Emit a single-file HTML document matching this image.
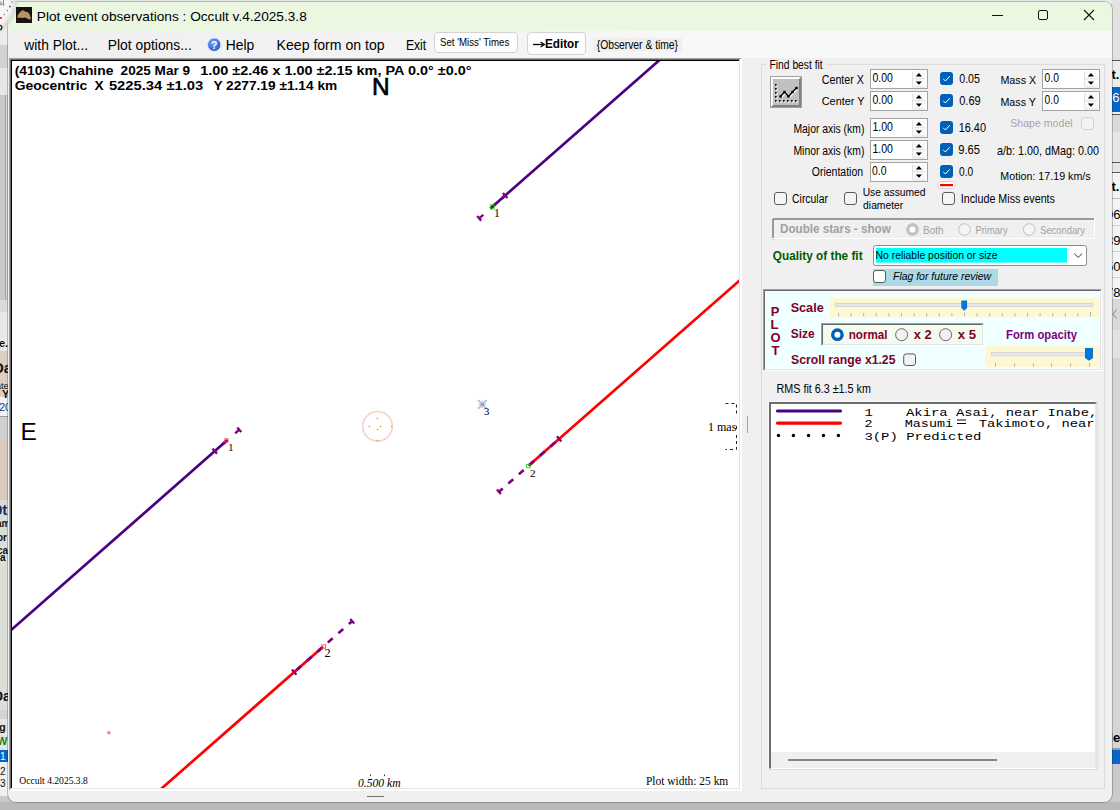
<!DOCTYPE html>
<html><head><meta charset="utf-8">
<style>
*{box-sizing:border-box;margin:0;padding:0}
html,body{width:1120px;height:810px;overflow:hidden;background:#c4c4c4;font-family:"Liberation Sans",sans-serif;position:relative}
.a{position:absolute}
.ov{position:absolute;left:0;top:0}
</style></head><body>
<!-- background windows -->
<div class="a" style="left:0;top:0;width:1120px;height:810px;background:#c9c9c9"></div>
<div class="a" style="left:0;top:0;width:1120px;height:4px;background:#e9e9e9"></div>
<div class="a" style="left:0;top:0;width:8px;height:45px;background:#ececec"></div>
<div class="a" style="left:0;top:45px;width:8px;height:23px;background:#d2d2d2"></div>
<div class="a" style="left:0;top:68px;width:8px;height:27px;background:#e6e6e6"></div>
<div class="a" style="left:5px;top:95px;width:1px;height:205px;background:#a2a2a2"></div>
<div class="a" style="left:6px;top:95px;width:1px;height:205px;background:#d6d6d6"></div>
<div class="a" style="left:0;top:300px;width:8px;height:12px;background:#d9d9d9"></div>
<div class="a" style="left:0;top:312px;width:8px;height:39px;background:#e9e9e9"></div>
<div class="a" style="left:0;top:351px;width:8px;height:46px;background:#dccfc0"></div>
<div class="a" style="left:0;top:397px;width:8px;height:19px;background:#f3f3f3"></div>
<div class="a" style="left:0;top:416px;width:8px;height:1px;background:#999"></div>
<div class="a" style="left:0;top:417px;width:8px;height:23px;background:#d0d0d0"></div>
<div class="a" style="left:0;top:440px;width:8px;height:60px;background:#d8cbbb"></div>
<div class="a" style="left:0;top:500px;width:8px;height:210px;background:#d9dfd6"></div>
<div class="a" style="left:0;top:710px;width:8px;height:40px;background:#e3e6e1"></div>
<div class="a" style="left:0;top:710px;width:8px;height:9px;background:#d4d4d4"></div>
<div class="a" style="left:0;top:750px;width:8px;height:12px;background:#0a64c8"></div>
<div class="a" style="left:0;top:762px;width:8px;height:34px;background:#f0f0f0"></div>
<svg class="a" style="left:0;top:0" width="12" height="810">
 <g font-family="Liberation Sans" font-weight="bold" fill="#111">
  <text x="-1" y="347.3" font-size="11">e.</text>
  <text x="-7" y="373.2" font-size="15">Da</text>
  <text x="-4" y="389.3" font-size="9" font-weight="normal">ate</text>
  <text x="2" y="397.9" font-size="11">Y</text>
  <text x="-1" y="410.9" font-size="11" font-weight="normal" fill="#1a3a8a">20</text>
  <text x="-6" y="515" font-size="15" fill="#1a2a5a">0t</text>
  <text x="-4" y="527" font-size="10">am</text>
  <text x="-3" y="541" font-size="10">or</text>
  <text x="-3" y="553.9" font-size="10">ca</text>
  <text x="0" y="561.3" font-size="10">a</text>
  <text x="-7" y="701.3" font-size="14">Da</text>
  <text x="-1" y="731" font-size="11">g</text>
  <text x="-3" y="744.7" font-size="11" fill="#2a7a2a">W</text>
  <text x="0" y="760" font-size="10" font-weight="normal" fill="#fff">1</text>
  <text x="0" y="775.4" font-size="10" font-weight="normal">2</text>
  <text x="0" y="787.2" font-size="10" font-weight="normal">3</text>
 </g>
</svg>
<div class="a" style="left:1112px;top:0;width:8px;height:60px;background:#e2e2e2"></div>
<div class="a" style="left:1112px;top:60px;width:8px;height:1px;background:#555"></div>
<div class="a" style="left:1112px;top:61px;width:8px;height:26px;background:#ececec"></div>
<div class="a" style="left:1112px;top:87px;width:8px;height:25px;background:#0866c6"></div>
<div class="a" style="left:1112px;top:112px;width:8px;height:2px;background:#f0f0f0"></div>
<div class="a" style="left:1112px;top:114px;width:8px;height:1px;background:#555"></div>
<div class="a" style="left:1112px;top:115px;width:8px;height:17px;background:#d9d9d9"></div>
<div class="a" style="left:1112px;top:132px;width:8px;height:30px;background:#e6e6e6"></div>
<div class="a" style="left:1112px;top:162px;width:8px;height:1px;background:#555"></div>
<div class="a" style="left:1112px;top:163px;width:8px;height:9px;background:#e6e6e6"></div>
<div class="a" style="left:1112px;top:172px;width:8px;height:1px;background:#555"></div>
<div class="a" style="left:1112px;top:173px;width:8px;height:126px;background:#f4f4f4"></div>
<div class="a" style="left:1112px;top:198px;width:8px;height:1px;background:#bdbdbd"></div>
<div class="a" style="left:1112px;top:225px;width:8px;height:1px;background:#d0d0d0"></div>
<div class="a" style="left:1112px;top:251px;width:8px;height:1px;background:#d0d0d0"></div>
<div class="a" style="left:1112px;top:277px;width:8px;height:1px;background:#d0d0d0"></div>
<div class="a" style="left:1112px;top:299px;width:8px;height:31px;background:#d9d9d9"></div>
<div class="a" style="left:1112px;top:330px;width:8px;height:28px;background:#e2e2e2"></div>
<div class="a" style="left:1112px;top:358px;width:8px;height:390px;background:#d5d5d5"></div>
<div class="a" style="left:1112px;top:748px;width:8px;height:2px;background:#9a9a9a"></div>
<div class="a" style="left:1112px;top:750px;width:8px;height:14px;background:#0866c6"></div>
<div class="a" style="left:1112px;top:764px;width:8px;height:38px;background:#cacaca"></div>
<svg class="a" style="left:0;top:0" width="1120" height="810">
 <g font-family="Liberation Sans" font-weight="bold" font-size="13">
  <text x="1111.5" y="78.5">t.</text>
  <text x="1105" y="102" fill="#fff" font-weight="normal">56</text>
  <text x="1111.5" y="190.5">t.</text>
  <text x="1106" y="219" font-weight="normal">06</text>
  <text x="1106" y="245.4" font-weight="normal">39</text>
  <text x="1106" y="271" font-weight="normal">50</text>
  <text x="1106" y="296.8" font-weight="normal">78</text>
  <text x="1105" y="742">de</text>
 </g>
 <path d="M1116.5 309.5L1113 314L1116.5 318.5" stroke="#888" stroke-width="1" fill="none"/>
</svg>
<div class="a" style="left:0;top:802px;width:1120px;height:8px;background:#b9b9b9"></div>

<!-- window -->
<div class="a" style="left:8px;top:2px;width:1104px;height:800px;background:#f0f0f0;border-radius:8px;overflow:hidden;box-shadow:0 0 0 1px rgba(0,0,0,0.22)">
 <div class="a" style="left:0;top:0;width:1104px;height:29px;background:#ebf7e1"></div>
 <div class="a" style="left:0;top:29px;width:1104px;height:27px;background:linear-gradient(to right,#efefef,#f4f4f4 40%,#f8f8f8 65%,#f8f8f8)"></div>
</div>

<svg class="a" style="left:0;top:0" width="40" height="40">
 <defs><radialGradient id="ck" cx="-20" cy="-1" r="40" gradientUnits="userSpaceOnUse"><stop offset="0.80" stop-color="#f6f6f6" stop-opacity="0.95"/><stop offset="0.9" stop-color="#d8d8d8" stop-opacity="0.8"/><stop offset="1" stop-color="#c8d4c0" stop-opacity="0"/></radialGradient></defs>
 <circle cx="-20" cy="-1" r="40" fill="url(#ck)"/>
 <g fill="#777"><circle cx="12" cy="2" r="0.8"/><circle cx="10" cy="6.5" r="1.1"/><circle cx="7.3" cy="10.5" r="0.7"/><circle cx="4.3" cy="14.5" r="0.7"/></g>
 <path d="M1 1V5.5M0 4H4.5M3.5 0V6" stroke="#888" stroke-width="0.9" fill="none"/>
 <rect x="0" y="17" width="2" height="2" fill="#e44"/>
 <path d="M-1 25.5C1.5 25 2.5 27 1.5 29C0.5 30 -1 29.5 -1 29.5" stroke="#222" stroke-width="1.3" fill="none"/>
</svg>
<!-- title icon -->
<div class="a" style="left:16px;top:7px;width:16px;height:16px;background:#17120c"></div>
<svg class="a" style="left:16px;top:7px" width="16" height="16"><path d="M1.3 10.2C1.4 7.6 3.8 5 6.3 3.4C7.4 2.8 8.4 3.6 9.3 4.9C10.4 4.6 11.8 4.9 12.6 5.8C13.8 7.4 14.6 9.8 14.9 12.4C13.4 12.9 11.2 11.6 9.2 10.6C7.2 11 5 10.9 3.1 10.7C2.2 10.9 1.4 10.7 1.3 10.2Z" fill="#b3936c"/></svg>
<!-- window controls -->
<div class="a" style="left:992px;top:15px;width:11px;height:1px;background:#111"></div>
<div class="a" style="left:1038px;top:10px;width:10px;height:10px;border:1px solid #111;border-radius:2px"></div>
<svg class="a" style="left:1083px;top:9px" width="12" height="12"><path d="M1 1L11 11M11 1L1 11" stroke="#111" stroke-width="1.1"/></svg>

<!-- menu widgets -->
<svg class="a" style="left:206px;top:37px" width="16" height="16"><defs><radialGradient id="hg" cx="0.4" cy="0.35" r="0.7"><stop offset="0" stop-color="#7aa8ff"/><stop offset="1" stop-color="#1d4fc9"/></radialGradient></defs><circle cx="8.2" cy="7.7" r="6.6" fill="url(#hg)" stroke="#d8e4ff" stroke-width="0.8"/><text x="8.2" y="11.6" font-family="Liberation Sans" font-weight="bold" font-size="10.5" fill="#fff" text-anchor="middle">?</text></svg>
<div class="a" style="left:434px;top:32px;width:84px;height:21px;background:#fdfdfd;border:1px solid #d3d3d3;border-radius:4px"></div>
<div class="a" style="left:527px;top:32px;width:59px;height:23px;background:#fdfdfd;border:1px solid #d3d3d3;border-radius:4px"></div>
<div class="a" style="left:593px;top:38px;width:89px;height:13px;background:#efefef"></div>
<svg class="a" style="left:0;top:0" width="700" height="60"><path d="M533 44.5H543" stroke="#000" stroke-width="1.3"/><path d="M540.6 42.1L544.4 44.5L540.6 46.9" stroke="#000" stroke-width="1.2" fill="none"/></svg>

<!-- plot box -->
<div class="a" style="left:9px;top:58px;width:733px;height:733px;background:#fff;border-top:1px solid #a0a0a0;border-left:1px solid #a0a0a0;border-right:2px solid #fff;border-bottom:2px solid #fff"></div>
<div class="a" style="left:10px;top:59px;width:730px;height:730px;background:#fff;border-top:1px solid #696969;border-left:1px solid #696969;border-right:1px solid #e3e3e3;border-bottom:1px solid #e3e3e3"></div>
<div class="a" style="left:11px;top:60px;width:728px;height:728px;background:#fff;border-top:1px solid #000;border-left:1px solid #000"></div>
<div class="a" style="left:747px;top:416px;width:1px;height:17px;background:#a0a0a0"></div>
<div class="a" style="left:367px;top:796px;width:17px;height:1px;background:#6e6e6e"></div>

<!-- group box -->
<div class="a" style="left:761px;top:64px;width:344px;height:725px;border:1px solid #dcdcdc"></div>
<div class="a" style="left:767px;top:60px;width:59px;height:8px;background:#f0f0f0"></div>

<!-- chart button -->
<div class="a" style="left:770px;top:76px;width:32px;height:32px;background:#c0c0c0;border:1px solid #a0a0a0"></div>
<div class="a" style="left:771px;top:77px;width:30px;height:30px;border-top:2px solid #fff;border-left:2px solid #fff;border-right:2px solid #808080;border-bottom:2px solid #808080"></div>
<svg class="a" style="left:770px;top:76px" width="32" height="32">
 <g fill="#fff"><rect x="6" y="9" width="1.6" height="1.6"/><rect x="6" y="13" width="1.6" height="1.6"/><rect x="6" y="17" width="1.6" height="1.6"/><rect x="6" y="21" width="1.6" height="1.6"/><rect x="6" y="25" width="1.6" height="1.6"/><rect x="10" y="25" width="1.6" height="1.6"/><rect x="14" y="25" width="1.6" height="1.6"/><rect x="18" y="25" width="1.6" height="1.6"/><rect x="22" y="25" width="1.6" height="1.6"/><rect x="26" y="25" width="1.6" height="1.6"/></g>
 <g fill="#000"><rect x="5" y="8" width="1.6" height="1.6"/><rect x="5" y="12" width="1.6" height="1.6"/><rect x="5" y="16" width="1.6" height="1.6"/><rect x="5" y="20" width="1.6" height="1.6"/><rect x="5" y="24" width="1.6" height="1.6"/><rect x="9" y="24" width="1.6" height="1.6"/><rect x="13" y="24" width="1.6" height="1.6"/><rect x="17" y="24" width="1.6" height="1.6"/><rect x="21" y="24" width="1.6" height="1.6"/><rect x="25" y="24" width="1.6" height="1.6"/></g>
 <path d="M10.5 20.5L14.5 16L18.5 20.5L22.5 16L26.5 12" stroke="#fff" stroke-width="1.6" fill="none" transform="translate(0.8,1)"/>
 <path d="M10.5 20.5L14.5 16L18.5 20.5L22.5 16L26.5 12" stroke="#000" stroke-width="1.4" fill="none"/>
 <g fill="#000"><rect x="9.3" y="19.3" width="2.4" height="2.4"/><rect x="13.3" y="14.8" width="2.4" height="2.4"/><rect x="17.3" y="19.3" width="2.4" height="2.4"/><rect x="21.3" y="14.8" width="2.4" height="2.4"/><rect x="25.3" y="10.8" width="2.4" height="2.4"/></g>
</svg>

<!-- spin boxes -->
<svg class="a" style="left:0;top:0" width="1120" height="810">
 <defs>
  <g id="spin">
   <rect x="0.5" y="0.5" width="57" height="19" fill="#fff" stroke="#a2a2a2"/>
   <rect x="42.5" y="2" width="13" height="7.5" fill="#fafafa"/>
   <rect x="42.5" y="10.5" width="13" height="7.5" fill="#fafafa"/>
   <path d="M42.5 2.5V17.5" stroke="#e2e2e2"/>
   <path d="M42.5 9.8H55.5M42.5 18H55.5" stroke="#dcdcdc"/>
   <path d="M45.8 7.4L48.9 4.1L52 7.4Z" fill="#000"/>
   <path d="M45.8 12.4L48.9 15.7L52 12.4Z" fill="#000"/>
  </g>
  <g id="cbx">
   <rect x="0" y="0" width="13" height="13" rx="3" fill="#005fb8"/>
   <path d="M3.2 6.8L5.4 9L9.8 4.2" stroke="#fff" stroke-width="1" fill="none"/>
  </g>
  <g id="cbe">
   <rect x="0.5" y="0.5" width="12" height="12" rx="2.5" fill="#f5f5f5" stroke="#5a5a5a"/>
  </g>
 </defs>
 <use href="#spin" x="870" y="69"/>
 <use href="#spin" x="870" y="91"/>
 <use href="#spin" x="870" y="118"/>
 <use href="#spin" x="870" y="140"/>
 <use href="#spin" x="870" y="162"/>
 <use href="#spin" x="1042" y="69"/>
 <use href="#spin" x="1042" y="91"/>
 <use href="#cbx" x="940" y="72"/>
 <use href="#cbx" x="940" y="94"/>
 <use href="#cbx" x="940" y="121"/>
 <use href="#cbx" x="940" y="143"/>
 <use href="#cbx" x="940" y="165"/>
 <rect x="937.5" y="181.5" width="18" height="7" rx="3.5" fill="#fff" stroke="#d4d4d4"/>
 <rect x="940" y="184" width="13" height="2.2" fill="#f00"/>
 <rect x="1081.5" y="117.5" width="12" height="12" rx="3" fill="#f3f3f3" stroke="#cfcfcf"/>
 <use href="#cbe" x="774" y="192"/>
 <use href="#cbe" x="844" y="192"/>
 <use href="#cbe" x="942" y="192"/>
 <!-- double stars panel -->
 <rect x="772" y="218" width="322.5" height="21" fill="#f0f0f0"/>
 <path d="M773 238.5V219H1094" stroke="#a0a0a0" stroke-width="1" fill="none"/>
 <path d="M772.5 239V218.5H1094.5" stroke="#6a6a6a" stroke-width="1" fill="none" transform="translate(0.5,0.5)"/>
 <path d="M772 238.5H1094.5V218" stroke="#fff" stroke-width="1" fill="none"/>
 <circle cx="912.5" cy="229.5" r="4.7" fill="#fff" stroke="#c2c2c2" stroke-width="3.4"/>
 <circle cx="964.5" cy="229.5" r="5.8" fill="#f5f5f5" stroke="#b8b8b8" stroke-width="0.9"/>
 <circle cx="1029.2" cy="229.5" r="5.8" fill="#f5f5f5" stroke="#b8b8b8" stroke-width="0.9"/>
 <!-- combo -->
 <rect x="873.5" y="245.5" width="213" height="20" rx="2" fill="#fff" stroke="#8c8c8c"/>
 <rect x="876" y="248" width="191" height="14.6" fill="#00ffff"/>
 <path d="M1074.3 253.6L1078.2 257.4L1082.1 253.6" stroke="#333" stroke-width="1" fill="none"/>
 <rect x="873" y="269" width="125" height="17" fill="#add8e6"/>
 <rect x="873.5" y="270.5" width="12" height="12" rx="2.5" fill="#fff" stroke="#5a5a5a"/>
</svg>

<!-- PLOT panel -->
<div class="a" style="left:763px;top:289px;width:339px;height:82px;background:#f0ffff;border-top:1px solid #a0a0a0;border-left:1px solid #a0a0a0;border-right:1px solid #fff;border-bottom:1px solid #fff"></div>
<div class="a" style="left:764px;top:290px;width:337px;height:80px;border-top:1px solid #696969;border-left:1px solid #696969;border-right:1px solid #e3e3e3;border-bottom:1px solid #e3e3e3"></div>
<div class="a" style="left:830px;top:298px;width:269px;height:19px;background:#fdf7d3"></div>
<div class="a" style="left:985px;top:346px;width:115px;height:21px;background:#fdf7d3"></div>
<div class="a" style="left:821px;top:323px;width:163px;height:23px;background:#f3fbee;border-top:1px solid #a0a0a0;border-left:1px solid #a0a0a0;border-right:1px solid #fff;border-bottom:1px solid #fff"></div>
<div class="a" style="left:822px;top:324px;width:161px;height:21px;border-top:1px solid #696969;border-left:1px solid #696969;border-right:1px solid #e3e3e3;border-bottom:1px solid #e3e3e3"></div>
<svg class="a" style="left:0;top:0" width="1120" height="810">
 <rect x="835.5" y="303.5" width="257" height="3" fill="#e7e7e7" stroke="#d6d6d6" stroke-width="1"/>
 <path d="M961.3 300.6H967.1V308L964.2 310.8L961.3 308Z" fill="#0078d7"/>
 <g stroke="#b4b4b4" stroke-width="1">
  <path d="M838.5 313V316.5M851.1 313V316.5M863.7 313V316.5M876.3 313V316.5M888.9 313V316.5M901.5 313V316.5M914.1 313V316.5M926.7 313V316.5M939.3 313V316.5M951.9 313V316.5M964.5 312.5V316.5M977.1 313V316.5M989.7 313V316.5M1002.3 313V316.5M1014.9 313V316.5M1027.5 313V316.5M1040.1 313V316.5M1052.7 313V316.5M1065.3 313V316.5M1077.9 313V316.5M1090.5 312V316.5"/>
  <path d="M995.5 363V366.8M1014.5 363.5V366.8M1033.5 363.5V366.8M1051.5 363.5V366.8M1070.5 363.5V366.8M1089.5 363V366.8"/>
 </g>
 <rect x="991.5" y="352.5" width="94" height="3.2" fill="#e7e7e7" stroke="#d6d6d6" stroke-width="1"/>
 <path d="M1085 347.9H1093V358L1089 360.8L1085 358Z" fill="#0078d7"/>
 <circle cx="837.4" cy="334.7" r="4.7" fill="#fff" stroke="#005fb8" stroke-width="3.4"/>
 <circle cx="901.6" cy="334.7" r="6" fill="#f3f3f3" stroke="#5a5a5a" stroke-width="0.9"/>
 <circle cx="945.6" cy="334.7" r="6" fill="#f3f3f3" stroke="#5a5a5a" stroke-width="0.9"/>
 <rect x="903.7" y="353.9" width="11.8" height="11.6" rx="2.5" fill="#f3f3f3" stroke="#5a5a5a"/>
</svg>

<!-- listbox -->
<div class="a" style="left:768px;top:401px;width:330px;height:369px;border-top:1px solid #f8f8f8;border-left:1px solid #f8f8f8;border-right:1px solid #dcdcdc;border-bottom:1px solid #dcdcdc"></div>
<div class="a" style="left:769px;top:402px;width:328px;height:367px;background:#fff;border-top:2px solid #6d6d6d;border-left:2px solid #6d6d6d;border-right:2px solid #e6e6e6;border-bottom:1px solid #fff"></div>
<div class="a" style="left:771px;top:752px;width:324px;height:16px;background:#f0f0f0"></div>
<div class="a" style="left:788px;top:759px;width:209px;height:2px;background:#858585"></div>
<svg class="a" style="left:0;top:0" width="1120" height="810">
 <path d="M777.5 411H840.5" stroke="#4b0082" stroke-width="3.2" stroke-linecap="round"/>
 <path d="M777.5 423.1H840.5" stroke="#ff0000" stroke-width="3.2" stroke-linecap="round"/>
 <g fill="#000"><circle cx="778.5" cy="435.5" r="1.7"/><circle cx="793.4" cy="435.5" r="1.7"/><circle cx="808.5" cy="435.5" r="1.7"/><circle cx="823.5" cy="435.5" r="1.7"/><circle cx="838.4" cy="435.5" r="1.7"/></g>
 <path d="M957 420H966M957 423.5H966" stroke="#000" stroke-width="1.1"/>
</svg>

<svg class="ov" width="1120" height="810"><defs><clipPath id="pc"><rect x="12" y="61" width="727" height="727"/></clipPath></defs><g clip-path="url(#pc)" fill="none"><path d="M490.30 208.60L790.88 -55.31" stroke="#4b0082" stroke-width="2.7" />
<path d="M490.30 208.60L505.18 195.54" stroke="#800080" stroke-width="2.8" stroke-dasharray="6.5 7.6" stroke-dashoffset="-1"/>
<path d="M502.94 192.98L507.42 198.09" stroke="#800080" stroke-width="2.3" />
<path d="M483.31 214.74L479.18 218.36" stroke="#800080" stroke-width="2.3" />
<path d="M477.20 216.11L481.16 220.62" stroke="#800080" stroke-width="2.3" />
<rect x="490.40" y="204.80" width="3.90" height="4.20" fill="none" stroke="#00e000" stroke-width="1.0" opacity="0.8"/>
<path d="M227.40 440.10L-73.18 704.01" stroke="#4b0082" stroke-width="2.7" />
<path d="M227.40 440.10L214.78 451.18" stroke="#800080" stroke-width="2.8" stroke-dasharray="6.5 7.6" stroke-dashoffset="-1"/>
<path d="M212.53 448.63L217.02 453.74" stroke="#800080" stroke-width="2.3" />
<path d="M235.14 433.30L239.27 429.68" stroke="#800080" stroke-width="2.3" />
<path d="M237.29 427.42L241.25 431.93" stroke="#800080" stroke-width="2.3" />
<rect x="224.80" y="438.70" width="3.30" height="3.30" fill="none" stroke="#ff4040" stroke-width="1.0" opacity="0.8"/>
<path d="M528.50 465.80L829.08 201.89" stroke="#ff0000" stroke-width="2.7" />
<path d="M528.50 465.80L559.16 438.88" stroke="#800080" stroke-width="2.8" stroke-dasharray="6.5 7.6" stroke-dashoffset="-1"/>
<path d="M556.92 436.33L561.40 441.44" stroke="#800080" stroke-width="2.3" />
<path d="M523.77 469.96L499.27 491.47" stroke="#800080" stroke-width="2.6" stroke-dasharray="6.5 7.5"/>
<path d="M496.91 489.54L500.87 494.05" stroke="#800080" stroke-width="2.3" />
<rect x="526.60" y="464.60" width="3.50" height="3.20" fill="none" stroke="#00dd00" stroke-width="1.0" opacity="0.8"/>
<path d="M323.10 646.70L22.52 910.61" stroke="#ff0000" stroke-width="2.7" />
<path d="M323.10 646.70L294.17 672.10" stroke="#800080" stroke-width="2.8" stroke-dasharray="6.5 7.6" stroke-dashoffset="-1"/>
<path d="M291.93 669.55L296.41 674.66" stroke="#800080" stroke-width="2.3" />
<path d="M327.83 642.54L351.81 621.50" stroke="#800080" stroke-width="2.6" stroke-dasharray="6.5 7.5"/>
<path d="M350.20 618.91L354.16 623.42" stroke="#800080" stroke-width="2.3" />
<rect x="321.70" y="644.80" width="3.80" height="3.50" fill="none" stroke="#ff4040" stroke-width="1.0" opacity="0.8"/>
<path d="M478.10 400.10L486.70 408.70M486.70 400.10L478.10 408.70" stroke="#b0c4de" stroke-width="2.0"/>
<path d="M478.60 404.40L486.20 404.40M482.40 400.60L482.40 408.20" stroke="#c0d0e6" stroke-width="1.3"/>
<rect x="481.00" y="403.00" width="2.8" height="2.8" fill="#ff69b4"/>
<circle cx="377.5" cy="426.3" r="14.8" fill="none" stroke="#f5bcb2" stroke-width="1.7" stroke-dasharray="1.4 0.7"/>
<rect x="376.8" y="417.8" width="1.4" height="1.4" fill="#ff9900"/>
<rect x="368.8" y="425.8" width="1.4" height="1.4" fill="#ff9900"/>
<rect x="379.8" y="425.8" width="1.4" height="1.4" fill="#ff9900"/>
<rect x="376.8" y="428.8" width="1.4" height="1.4" fill="#ff9900"/>
<rect x="390.90000000000003" y="425.8" width="1.4" height="1.4" fill="#ff9900"/>
<rect x="376.8" y="439.8" width="1.4" height="1.4" fill="#ff9900"/>
<circle cx="108.9" cy="732.7" r="1.7" fill="#ff6ab8"/>
<path d="M725.5 403.5H736.5V416M736.5 426V430M736.5 435V449.5H725.5" stroke="#222" stroke-width="1" fill="none" stroke-dasharray="3 3"/>
<rect x="370" y="774.5" width="1" height="1.6" fill="#333"/><rect x="384" y="774.5" width="1" height="1.6" fill="#333"/></g></svg>
<svg class="ov" width="1120" height="810"><text x="36.88" y="20.80" font-family="Liberation Sans" font-size="13.37" textLength="269.85" lengthAdjust="spacingAndGlyphs" xml:space="preserve">Plot event observations : Occult v.4.2025.3.8</text>
<text x="24.30" y="49.90" font-family="Liberation Sans" font-size="13.95" textLength="63.79" lengthAdjust="spacingAndGlyphs" xml:space="preserve">with Plot...</text>
<text x="107.75" y="49.90" font-family="Liberation Sans" font-size="13.95" textLength="84.09" lengthAdjust="spacingAndGlyphs" xml:space="preserve">Plot options...</text>
<text x="225.81" y="49.90" font-family="Liberation Sans" font-size="13.95" textLength="28.46" lengthAdjust="spacingAndGlyphs" xml:space="preserve">Help</text>
<text x="276.59" y="49.90" font-family="Liberation Sans" font-size="13.95" textLength="108.03" lengthAdjust="spacingAndGlyphs" xml:space="preserve">Keep form on top</text>
<text x="405.93" y="49.90" font-family="Liberation Sans" font-size="13.95" textLength="20.28" lengthAdjust="spacingAndGlyphs" xml:space="preserve">Exit</text>
<text x="439.93" y="45.70" font-family="Liberation Sans" font-size="10.03" textLength="69.36" lengthAdjust="spacingAndGlyphs" xml:space="preserve">Set &#x27;Miss&#x27; Times</text>
<text x="544.97" y="47.90" font-family="Liberation Sans" font-size="12.65" font-weight="bold" textLength="33.88" lengthAdjust="spacingAndGlyphs" xml:space="preserve">Editor</text>
<text x="596.70" y="48.50" font-family="Liberation Sans" font-size="12.21" textLength="81.36" lengthAdjust="spacingAndGlyphs" xml:space="preserve">{Observer &amp; time}</text>
<text x="14.73" y="74.50" font-family="Liberation Sans" font-size="13.66" font-weight="bold" textLength="98.72" lengthAdjust="spacingAndGlyphs" xml:space="preserve">(4103) Chahine</text>
<text x="120.60" y="74.50" font-family="Liberation Sans" font-size="13.66" font-weight="bold" textLength="69.46" lengthAdjust="spacingAndGlyphs" xml:space="preserve">2025 Mar 9</text>
<text x="200.24" y="74.50" font-family="Liberation Sans" font-size="13.66" font-weight="bold" textLength="271.32" lengthAdjust="spacingAndGlyphs" xml:space="preserve">1.00 ±2.46 x 1.00 ±2.15 km, PA 0.0° ±0.0°</text>
<text x="14.73" y="90.20" font-family="Liberation Sans" font-size="13.66" font-weight="bold" textLength="72.62" lengthAdjust="spacingAndGlyphs" xml:space="preserve">Geocentric</text>
<text x="94.55" y="90.20" font-family="Liberation Sans" font-size="13.66" font-weight="bold" xml:space="preserve">X</text>
<text x="108.92" y="90.20" font-family="Liberation Sans" font-size="13.66" font-weight="bold" textLength="94.33" lengthAdjust="spacingAndGlyphs" xml:space="preserve">5225.34 ±1.03</text>
<text x="213.40" y="90.20" font-family="Liberation Sans" font-size="13.66" font-weight="bold" textLength="123.82" lengthAdjust="spacingAndGlyphs" xml:space="preserve">Y 2277.19 ±1.14 km</text>
<text x="372.10" y="94.80" font-family="Liberation Sans" font-size="24.42" stroke="#000" stroke-width="0.7" xml:space="preserve">N</text>
<text x="20.40" y="439.90" font-family="Liberation Sans" font-size="24.42" xml:space="preserve">E</text>
<text x="707.91" y="430.50" font-family="Liberation Serif" font-size="12.82" textLength="28.52" lengthAdjust="spacingAndGlyphs" xml:space="preserve">1 mas</text>
<text x="494.00" y="216.70" font-family="Liberation Serif" font-size="11.60" xml:space="preserve">1</text>
<text x="227.95" y="450.60" font-family="Liberation Serif" font-size="11.30" xml:space="preserve">1</text>
<text x="530.00" y="476.80" font-family="Liberation Serif" font-size="11.30" xml:space="preserve">2</text>
<text x="324.60" y="656.90" font-family="Liberation Serif" font-size="12.21" xml:space="preserve">2</text>
<text x="483.65" y="414.80" font-family="Liberation Serif" font-size="11.30" xml:space="preserve">3</text>
<text x="19.25" y="784.10" font-family="Liberation Serif" font-size="10.84" textLength="68.57" lengthAdjust="spacingAndGlyphs" xml:space="preserve">Occult 4.2025.3.8</text>
<text x="358.00" y="786.80" font-family="Liberation Serif" font-size="12.21" font-style="italic" textLength="42.51" lengthAdjust="spacingAndGlyphs" xml:space="preserve">0.500 km</text>
<text x="645.96" y="784.80" font-family="Liberation Serif" font-size="12.21" textLength="82.30" lengthAdjust="spacingAndGlyphs" xml:space="preserve">Plot width: 25 km</text>
<text x="769.54" y="68.80" font-family="Liberation Sans" font-size="11.92" textLength="53.17" lengthAdjust="spacingAndGlyphs" xml:space="preserve">Find best fit</text>
<text x="821.80" y="83.50" font-family="Liberation Sans" font-size="11.92" textLength="42.10" lengthAdjust="spacingAndGlyphs" xml:space="preserve">Center X</text>
<text x="821.76" y="105.30" font-family="Liberation Sans" font-size="11.63" textLength="42.71" lengthAdjust="spacingAndGlyphs" xml:space="preserve">Center Y</text>
<text x="793.45" y="132.70" font-family="Liberation Sans" font-size="12.21" textLength="70.90" lengthAdjust="spacingAndGlyphs" xml:space="preserve">Major axis (km)</text>
<text x="793.45" y="154.70" font-family="Liberation Sans" font-size="12.21" textLength="70.90" lengthAdjust="spacingAndGlyphs" xml:space="preserve">Minor axis (km)</text>
<text x="811.76" y="175.50" font-family="Liberation Sans" font-size="12.50" textLength="51.37" lengthAdjust="spacingAndGlyphs" xml:space="preserve">Orientation</text>
<text x="872.50" y="82.00" font-family="Liberation Sans" font-size="13.08" textLength="20.38" lengthAdjust="spacingAndGlyphs" xml:space="preserve">0.00</text>
<text x="872.50" y="104.10" font-family="Liberation Sans" font-size="13.08" textLength="20.38" lengthAdjust="spacingAndGlyphs" xml:space="preserve">0.00</text>
<text x="872.38" y="131.10" font-family="Liberation Sans" font-size="12.79" textLength="20.53" lengthAdjust="spacingAndGlyphs" xml:space="preserve">1.00</text>
<text x="872.38" y="153.00" font-family="Liberation Sans" font-size="12.79" textLength="20.53" lengthAdjust="spacingAndGlyphs" xml:space="preserve">1.00</text>
<text x="872.10" y="174.80" font-family="Liberation Sans" font-size="12.79" textLength="14.32" lengthAdjust="spacingAndGlyphs" xml:space="preserve">0.0</text>
<text x="959.20" y="83.00" font-family="Liberation Sans" font-size="12.94" textLength="20.83" lengthAdjust="spacingAndGlyphs" xml:space="preserve">0.05</text>
<text x="959.20" y="104.90" font-family="Liberation Sans" font-size="12.79" textLength="21.47" lengthAdjust="spacingAndGlyphs" xml:space="preserve">0.69</text>
<text x="958.70" y="131.70" font-family="Liberation Sans" font-size="12.21" textLength="27.34" lengthAdjust="spacingAndGlyphs" xml:space="preserve">16.40</text>
<text x="958.24" y="153.90" font-family="Liberation Sans" font-size="12.94" textLength="21.70" lengthAdjust="spacingAndGlyphs" xml:space="preserve">9.65</text>
<text x="959.10" y="175.70" font-family="Liberation Sans" font-size="12.79" textLength="14.22" lengthAdjust="spacingAndGlyphs" xml:space="preserve">0.0</text>
<text x="1000.44" y="83.70" font-family="Liberation Sans" font-size="11.19" textLength="35.65" lengthAdjust="spacingAndGlyphs" xml:space="preserve">Mass X</text>
<text x="1000.44" y="105.60" font-family="Liberation Sans" font-size="11.19" textLength="35.46" lengthAdjust="spacingAndGlyphs" xml:space="preserve">Mass Y</text>
<text x="1044.60" y="82.20" font-family="Liberation Sans" font-size="12.21" textLength="14.26" lengthAdjust="spacingAndGlyphs" xml:space="preserve">0.0</text>
<text x="1044.60" y="104.30" font-family="Liberation Sans" font-size="12.21" textLength="14.26" lengthAdjust="spacingAndGlyphs" xml:space="preserve">0.0</text>
<text x="1010.28" y="127.40" font-family="Liberation Sans" font-size="11.48" fill="#a6a6a6" textLength="62.37" lengthAdjust="spacingAndGlyphs" xml:space="preserve">Shape model</text>
<text x="997.00" y="154.90" font-family="Liberation Sans" font-size="11.92" textLength="102.08" lengthAdjust="spacingAndGlyphs" xml:space="preserve">a/b: 1.00, dMag: 0.00</text>
<text x="1000.35" y="179.50" font-family="Liberation Sans" font-size="11.19" textLength="90.25" lengthAdjust="spacingAndGlyphs" xml:space="preserve">Motion: 17.19 km/s</text>
<text x="792.07" y="202.90" font-family="Liberation Sans" font-size="12.50" textLength="35.89" lengthAdjust="spacingAndGlyphs" xml:space="preserve">Circular</text>
<text x="862.66" y="196.10" font-family="Liberation Sans" font-size="10.90" textLength="62.91" lengthAdjust="spacingAndGlyphs" xml:space="preserve">Use assumed</text>
<text x="863.10" y="208.60" font-family="Liberation Sans" font-size="10.90" textLength="40.16" lengthAdjust="spacingAndGlyphs" xml:space="preserve">diameter</text>
<text x="960.83" y="202.60" font-family="Liberation Sans" font-size="12.35" textLength="94.12" lengthAdjust="spacingAndGlyphs" xml:space="preserve">Include Miss events</text>
<text x="779.97" y="233.00" font-family="Liberation Sans" font-size="12.50" font-weight="bold" fill="#a0a0a0" textLength="110.83" lengthAdjust="spacingAndGlyphs" xml:space="preserve">Double stars - show</text>
<text x="923.12" y="233.80" font-family="Liberation Sans" font-size="10.17" fill="#a0a0a0" textLength="20.58" lengthAdjust="spacingAndGlyphs" xml:space="preserve">Both</text>
<text x="975.50" y="234.00" font-family="Liberation Sans" font-size="10.32" fill="#a0a0a0" textLength="32.08" lengthAdjust="spacingAndGlyphs" xml:space="preserve">Primary</text>
<text x="1040.19" y="234.00" font-family="Liberation Sans" font-size="10.32" fill="#a0a0a0" textLength="44.69" lengthAdjust="spacingAndGlyphs" xml:space="preserve">Secondary</text>
<text x="772.80" y="259.50" font-family="Liberation Sans" font-size="12.21" font-weight="bold" fill="#005a00" textLength="89.77" lengthAdjust="spacingAndGlyphs" xml:space="preserve">Quality of the fit</text>
<text x="875.55" y="258.90" font-family="Liberation Sans" font-size="10.90" textLength="121.91" lengthAdjust="spacingAndGlyphs" xml:space="preserve">No reliable position or size</text>
<text x="893.00" y="280.10" font-family="Liberation Sans" font-size="10.90" font-style="italic" textLength="98.08" lengthAdjust="spacingAndGlyphs" xml:space="preserve">Flag for future review</text>
<text x="770.80" y="315.90" font-family="Liberation Sans" font-size="12.94" font-weight="bold" fill="#7f0028" xml:space="preserve">P</text>
<text x="770.45" y="328.90" font-family="Liberation Sans" font-size="13.08" font-weight="bold" fill="#7f0028" xml:space="preserve">L</text>
<text x="770.45" y="341.50" font-family="Liberation Sans" font-size="12.94" font-weight="bold" fill="#7f0028" xml:space="preserve">O</text>
<text x="771.50" y="354.80" font-family="Liberation Sans" font-size="12.94" font-weight="bold" fill="#7f0028" xml:space="preserve">T</text>
<text x="790.66" y="311.70" font-family="Liberation Sans" font-size="12.21" font-weight="bold" fill="#7f0028" textLength="33.03" lengthAdjust="spacingAndGlyphs" xml:space="preserve">Scale</text>
<text x="790.75" y="337.60" font-family="Liberation Sans" font-size="12.50" font-weight="bold" fill="#7f0028" textLength="23.87" lengthAdjust="spacingAndGlyphs" xml:space="preserve">Size</text>
<text x="791.10" y="363.60" font-family="Liberation Sans" font-size="12.21" font-weight="bold" fill="#7f0028" textLength="104.33" lengthAdjust="spacingAndGlyphs" xml:space="preserve">Scroll range x1.25</text>
<text x="848.72" y="339.00" font-family="Liberation Sans" font-size="13.23" font-weight="bold" fill="#7f0028" textLength="38.73" lengthAdjust="spacingAndGlyphs" xml:space="preserve">normal</text>
<text x="913.80" y="339.00" font-family="Liberation Sans" font-size="12.65" font-weight="bold" fill="#7f0028" textLength="17.87" lengthAdjust="spacingAndGlyphs" xml:space="preserve">x 2</text>
<text x="957.80" y="339.00" font-family="Liberation Sans" font-size="12.65" font-weight="bold" fill="#7f0028" textLength="18.39" lengthAdjust="spacingAndGlyphs" xml:space="preserve">x 5</text>
<text x="1006.09" y="338.90" font-family="Liberation Sans" font-size="12.35" font-weight="bold" fill="#800080" textLength="70.87" lengthAdjust="spacingAndGlyphs" xml:space="preserve">Form opacity</text>
<text x="776.55" y="392.70" font-family="Liberation Sans" font-size="12.65" textLength="94.30" lengthAdjust="spacingAndGlyphs" xml:space="preserve">RMS fit 6.3 ±1.5 km</text>
<text x="864.43" y="415.90" font-family="Liberation Mono" font-size="11.84" textLength="232.87" lengthAdjust="spacingAndGlyphs" xml:space="preserve">1    Akira Asai, near Inabe,</text>
<text x="864.46" y="427.00" font-family="Liberation Mono" font-size="11.84" textLength="88.64" lengthAdjust="spacingAndGlyphs" xml:space="preserve">2    Masumi</text>
<text x="978.74" y="427.00" font-family="Liberation Mono" font-size="11.84" textLength="115.77" lengthAdjust="spacingAndGlyphs" xml:space="preserve">Takimoto, near</text>
<text x="864.42" y="440.00" font-family="Liberation Mono" font-size="11.84" textLength="117.00" lengthAdjust="spacingAndGlyphs" xml:space="preserve">3(P) Predicted</text></svg>
</body></html>
